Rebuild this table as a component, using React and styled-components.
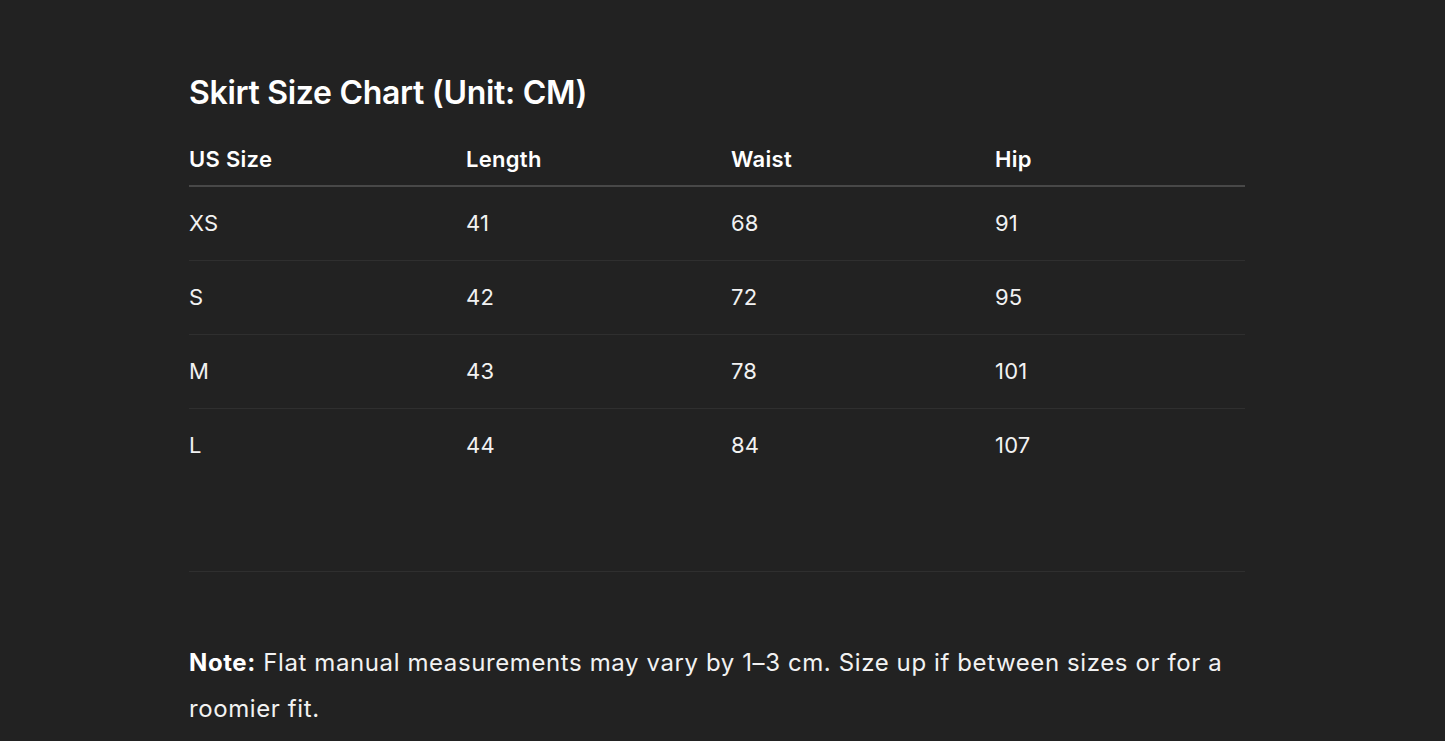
import React from "react";
import styled, { createGlobalStyle } from "styled-components";

const GlobalStyle = createGlobalStyle`
  html, body {
    margin: 0;
    padding: 0;
    background: #222222;
  }
  body {
    font-family: Inter, "Liberation Sans", sans-serif;
    color: #f5f5f5;
    -webkit-font-smoothing: antialiased;
  }
`;

const rows = [
  ["XS", "41", "68", "91"],
  ["S", "42", "72", "95"],
  ["M", "43", "78", "101"],
  ["L", "44", "84", "107"],
];

const headers = ["US Size", "Length", "Waist", "Hip"];
const widths = [277, 265, 264, 250];

const App = () => {
  return (
    <>
      <GlobalStyle />
      <Page>
        <Title>Skirt Size Chart (Unit: CM)</Title>
        <Table>
          <colgroup>
            {widths.map((w, i) => (
              <col key={i} style={{ width: w }} />
            ))}
          </colgroup>
          <thead>
            <tr>
              {headers.map((h) => (
                <HeadCell key={h}>{h}</HeadCell>
              ))}
            </tr>
          </thead>
          <tbody>
            {rows.map((r) => (
              <Row key={r[0]}>
                {r.map((c, i) => (
                  <Cell key={i}>{c}</Cell>
                ))}
              </Row>
            ))}
          </tbody>
        </Table>
        <Divider />
        <Note>
          <strong>Note:</strong> Flat manual measurements may vary by 1–3 cm.
          Size up if between sizes or for a roomier fit.
        </Note>
      </Page>
    </>
  );
};

const Page = styled.main`
  width: 1056px;
  padding: 73px 0 0 189px;
`;

const Title = styled.h2`
  margin: 0 0 20px;
  font-size: 32px;
  line-height: 40px;
  font-weight: 600;
  letter-spacing: -0.3px;
  color: #ffffff;
`;

const Table = styled.table`
  width: 100%;
  border-collapse: collapse;
  table-layout: fixed;
`;

const HeadCell = styled.th`
  text-align: left;
  padding: 12px 0;
  font-size: 22px;
  line-height: 28px;
  font-weight: 600;
  letter-spacing: 0.3px;
  color: #ffffff;
  border-bottom: 2px solid #484848;
`;

const Row = styled.tr`
  border-bottom: 1px solid #2f2f2f;
  &:last-child {
    border-bottom: none;
  }
`;

const Cell = styled.td`
  padding: 22px 0;
  font-size: 22px;
  line-height: 29px;
  font-weight: 400;
  letter-spacing: 0.2px;
  color: #f2f2f2;
`;

const Divider = styled.hr`
  margin: 89px 0 0;
  border: none;
  border-top: 1px solid #2f2f2f;
`;

const Note = styled.p`
  margin: 68px 0 0;
  font-size: 24px;
  line-height: 46px;
  letter-spacing: 0.6px;
  color: #f2f2f2;
  strong {
    font-weight: 700;
    color: #ffffff;
  }
`;

export default App;
